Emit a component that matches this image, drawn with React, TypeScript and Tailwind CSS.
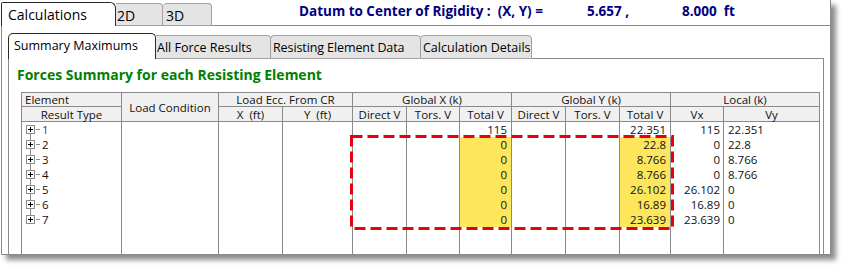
import React from "react";

const cols = "grid-cols-[99px_96px_63px_69px_53px_52px_51px_53px_53px_50px_52px_95px]";

const totalX = ["115", "0", "0", "0", "0", "0", "0"];
const totalY = ["22.351", "22.8", "8.766", "8.766", "26.102", "16.89", "23.639"];
const vx = ["115", "0", "0", "0", "26.102", "16.89", "23.639"];
const vy = ["22.351", "22.8", "8.766", "8.766", "0", "0", "0"];

function PlusBox() {
  return (
    <svg width="9" height="9" viewBox="0 0 9 9" className="block">
      <rect x="0.5" y="0.5" width="8" height="8" fill="white" stroke="#8c8c8c" />
      <line x1="2" y1="4.5" x2="7" y2="4.5" stroke="#000" />
      <line x1="4.5" y1="2" x2="4.5" y2="7" stroke="#000" />
    </svg>
  );
}

function TreeCell({ i }: { i: number }) {
  return (
    <div className="h-[15px] flex items-start overflow-hidden">
      <div className="ml-[4px] w-[9px] h-[15px] flex flex-col">
        <div className={"ml-[4px] w-px h-[3px] " + (i > 0 ? "bg-[#8c8c8c]" : "")} />
        <PlusBox />
        <div className={"ml-[4px] w-px h-[3px] " + (i < 6 ? "bg-[#8c8c8c]" : "")} />
      </div>
      <div className="mt-[7px] w-[4px] h-px bg-[#8c8c8c] ml-px" />
      <div className={"ml-[2px] h-[15px] leading-[15px] " + (i === 0 ? "text-[#5a2a80]" : "text-[#111]")}>{i + 1}</div>
    </div>
  );
}

function EmptyCol() {
  return <div className="bg-white" />;
}

function NumCol({ vals, hl, right = true, pad }: { vals: string[]; hl?: boolean; right?: boolean; pad: string }) {
  return (
    <div className="bg-white flex flex-col">
      {vals.map((v, i) => (
        <div
          key={i}
          className={
            "h-[15px] leading-[15px] " +
            (right ? "text-right " : "text-left ") +
            pad +
            (hl && i > 0 ? " bg-[#fde55c]" : "")
          }
        >
          {v}
        </div>
      ))}
    </div>
  );
}

export default function App() {
  const hc = "bg-[#f0f0f0] flex items-center justify-center leading-none whitespace-pre pt-px";
  return (
    <div className="relative w-[847px] h-[270px] bg-white pl-px overflow-hidden font-['Open_Sans',sans-serif] text-[#111]">
      <div className="w-[830px] h-[255px] flex flex-col bg-white border-r border-b border-[#8a8a8a] shadow-[5px_5px_5px_rgba(0,0,0,0.45)]">
        {/* top tab row */}
        <div className="h-[26px] flex items-end">
          <div className="w-[115px] h-[24px] border-l border-t border-r border-[#2a2a2a] rounded-tr-[6px] rounded-tl-[2px] bg-white pl-[6px] pt-[2px] text-[14px] leading-[20px] text-black">
            Calculations
          </div>
          <div className="w-[47px] h-[23px] border-t border-r border-b border-[#a0a0a0] rounded-tr-[4px] bg-[#e4e4e4] pl-px pt-[3px] text-[14px] leading-[18px] text-black">
            2D
          </div>
          <div className="w-[49px] h-[23px] border-t border-r border-b border-[#a0a0a0] rounded-t-[4px] bg-[#e4e4e4] pl-[3px] pt-[3px] text-[14px] leading-[18px] text-black">
            3D
          </div>
          <div className="flex-1 h-full border-b border-[#8a8a8a] pl-[87px] flex items-center pb-[2px] text-[13.5px] font-bold text-[#000080] whitespace-pre">
            <span className="w-[288px]">Datum to Center of Rigidity :  (X, Y) =</span>
            <span className="w-[95px]">5.657 ,</span>
            <span>8.000  ft</span>
          </div>
        </div>

        {/* outer panel */}
        <div className="flex-1 flex flex-col border-l border-[#8a8a8a] pl-[6px] pr-[6px] pt-[7px]">
          {/* sub tabs */}
          <div className="h-[26px] flex items-end text-[12.5px] text-black">
            <div className="w-[148px] h-[26px] border-l border-t border-r border-[#2a2a2a] rounded-t-[5px] bg-white pl-[5px] pt-[3px] leading-[18px]">
              Summary Maximums
            </div>
            <div className="w-[115px] h-[24px] border-t border-r border-b border-[#a0a0a0] rounded-tr-[4px] bg-[#e4e4e4] pl-px pt-[3px] leading-[18px]">
              All Force Results
            </div>
            <div className="w-[151px] h-[24px] -ml-px border-l border-t border-r border-b border-[#a0a0a0] rounded-t-[4px] bg-[#e4e4e4] pl-[2px] pt-[3px] leading-[18px] tracking-[-0.1px]">
              Resisting Element Data
            </div>
            <div className="w-[112px] h-[24px] -ml-px border-l border-t border-r border-b border-[#a0a0a0] rounded-t-[4px] bg-[#e4e4e4] pl-[2px] pt-[3px] leading-[18px]">
              Calculation Details
            </div>
            <div className="flex-1 h-full border-b border-[#8a8a8a]" />
          </div>

          {/* inner panel */}
          <div className="flex-1 flex flex-col border-l border-r border-[#8a8a8a]">
            <div className="ml-[8px] mt-[6px] h-[20px] leading-[20px] text-[14px] font-bold text-[#008000]">
              Forces Summary for each Resisting Element
            </div>
            <div className="ml-[12px] mt-[7px] w-[799px] flex-1 flex flex-col text-[11.5px]">
              {/* header */}
              <div className={"grid " + cols + " grid-rows-[13px_14px] gap-px p-px bg-[#8a8a8a]"}>
                <div className="bg-[#f0f0f0] flex items-center pl-[3px] leading-none pt-px">Element</div>
                <div className={hc + " row-span-2"}>Load Condition</div>
                <div className={hc + " col-span-2"}>Load Ecc. From CR</div>
                <div className={hc + " col-span-3"}>Global X (k)</div>
                <div className={hc + " col-span-3"}>Global Y (k)</div>
                <div className={hc + " col-span-2"}>Local (k)</div>
                <div className={hc}>Result Type</div>
                <div className={hc}>X  (ft)</div>
                <div className={hc}>Y  (ft)</div>
                <div className={hc}>Direct V</div>
                <div className={hc}>Tors. V</div>
                <div className={hc}>Total V</div>
                <div className={hc}>Direct V</div>
                <div className={hc}>Tors. V</div>
                <div className={hc}>Total V</div>
                <div className={hc}>Vx</div>
                <div className={hc}>Vy</div>
              </div>
              {/* body */}
              <div className={"flex-1 grid " + cols + " grid-rows-[1fr] gap-x-px px-px bg-[#8a8a8a]"}>
                <div className="bg-white flex flex-col">
                  {totalX.map((_, i) => (
                    <TreeCell key={i} i={i} />
                  ))}
                </div>
                <EmptyCol />
                <EmptyCol />
                <EmptyCol />
                <EmptyCol />
                <EmptyCol />
                <NumCol vals={totalX} hl pad="pr-[4px]" />
                <EmptyCol />
                <EmptyCol />
                <NumCol vals={totalY} hl pad="pr-[4px]" />
                <NumCol vals={vx} pad="pr-[3px]" />
                <NumCol vals={vy} right={false} pad="pl-[4px]" />
              </div>
            </div>
          </div>
        </div>
      </div>

      {/* red dashed annotation */}
      <svg className="absolute left-[350px] top-[135px]" width="324" height="95" viewBox="0 0 324 95">
        <rect x="1.5" y="1.5" width="321" height="92" fill="none" stroke="#e8000b" strokeWidth="3" strokeDasharray="11 5" />
      </svg>
    </div>
  );
}
